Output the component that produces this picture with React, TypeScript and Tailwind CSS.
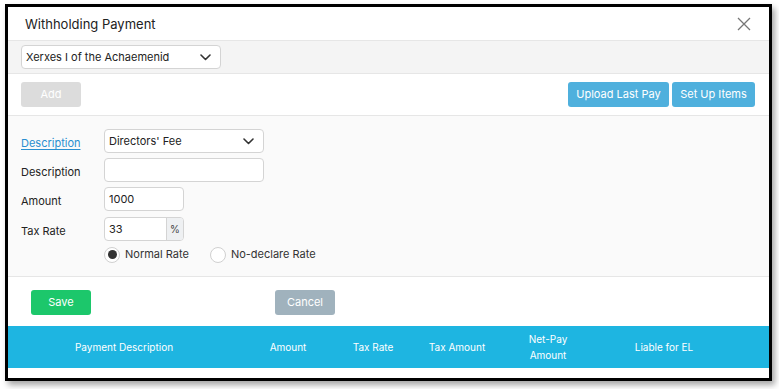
import React from "react";

const Chevron = () => (
  <svg width="11" height="7" viewBox="0 0 11 7" fill="none" className="shrink-0">
    <path d="M1 1l4.5 4.5L10 1" stroke="#333" strokeWidth="1.6" strokeLinecap="round" strokeLinejoin="round" />
  </svg>
);

export default function App() {
  const font = { fontFamily: "Inter, 'Noto Sans', sans-serif" };
  return (
    <div className="w-[779px] h-[389px] bg-white pl-[5px] pt-[4px]" style={font}>
      <div className="w-[767px] h-[377px] border-[3px] border-black bg-white flex flex-col shadow-[3px_4px_6px_rgba(0,0,0,0.35)] overflow-hidden">
        {/* header */}
        <div className="h-[34px] shrink-0 flex items-center justify-between pl-[17px] pr-[17px] border-b border-[#e6e6e6]">
          <span className="text-[13px] text-[#222] pt-[2px]">Withholding Payment</span>
          <svg width="14" height="14" viewBox="0 0 14 14" className="mr-[1px]">
            <path d="M1 1l12 12M13 1L1 13" stroke="#777" strokeWidth="1.3" />
          </svg>
        </div>
        {/* employee select band */}
        <div className="h-[33px] shrink-0 bg-[#f4f4f4] border-b border-[#e6e6e6] flex items-center pl-[13px]">
          <div className="w-[200px] h-[24px] bg-white border border-[#d4d4d4] rounded-[4px] flex items-center justify-between pl-[4px] pr-[9px]">
            <span className="text-[11px] text-[#222]">Xerxes I of the Achaemenid</span>
            <Chevron />
          </div>
        </div>
        {/* buttons band */}
        <div className="h-[42px] shrink-0 border-b border-[#e6e6e6] flex items-center justify-between pl-[13px] pr-[14px]">
          <button className="w-[60px] h-[25px] rounded-[3px] bg-[#dcdcdc] text-white text-[11px]">Add</button>
          <div className="flex gap-[3px]">
            <button className="w-[101px] h-[25px] rounded-[3px] bg-[#4fb0dd] text-white text-[11px]">Upload Last Pay</button>
            <button className="w-[83px] h-[25px] rounded-[3px] bg-[#4fb0dd] text-white text-[11px]">Set Up Items</button>
          </div>
        </div>
        {/* form */}
        <div className="h-[161px] shrink-0 bg-[#fafafa] border-b border-[#e6e6e6] pl-[13px] pt-[13px] flex flex-col text-[11px] text-[#222]">
          <div className="flex items-center h-[24px]">
            <span className="w-[83px] pt-[4px] text-[#2a8fd0] underline underline-offset-2">Description</span>
            <div className="w-[160px] h-[24px] bg-white border border-[#d4d4d4] rounded-[4px] flex items-center justify-between pl-[4px] pr-[9px]">
              <span>Directors' Fee</span>
              <Chevron />
            </div>
          </div>
          <div className="flex items-center h-[24px] mt-[5px]">
            <span className="w-[83px] pt-[4px]">Description</span>
            <div className="w-[160px] h-[24px] bg-white border border-[#d4d4d4] rounded-[4px]" />
          </div>
          <div className="flex items-center h-[24px] mt-[5px]">
            <span className="w-[83px] pt-[4px]">Amount</span>
            <div className="w-[80px] h-[24px] bg-white border border-[#d4d4d4] rounded-[4px] flex items-center pl-[4px]">1000</div>
          </div>
          <div className="flex items-center h-[24px] mt-[6px]">
            <span className="w-[83px] pt-[4px]">Tax Rate</span>
            <div className="w-[80px] h-[24px] bg-white border border-[#d4d4d4] rounded-[4px] flex overflow-hidden">
              <div className="flex-1 flex items-center pl-[4px]">33</div>
              <div className="w-[17px] bg-[#eef0f2] border-l border-[#d4d4d4] flex items-center justify-center text-[10px] text-[#444]">%</div>
            </div>
          </div>
          <div className="flex items-center h-[17px] mt-[5px] pl-[83px]">
            <div className="w-[16px] h-[16px] rounded-full border border-[#d0d0d0] bg-white flex items-center justify-center">
              <div className="w-[9px] h-[9px] rounded-full bg-[#333]" />
            </div>
            <span className="ml-[5px] text-[#333]">Normal Rate</span>
            <div className="w-[16px] h-[16px] rounded-full border border-[#d0d0d0] bg-white ml-[21px]" />
            <span className="ml-[5px] text-[#333]">No-declare Rate</span>
          </div>
        </div>
        {/* footer */}
        <div className="h-[49px] shrink-0 flex items-center pl-[23px] pt-[1px]">
          <button className="w-[60px] h-[25px] rounded-[3px] bg-[#1cc76b] text-white text-[11px]">Save</button>
          <button className="w-[60px] h-[25px] rounded-[3px] bg-[#a0b2bd] text-white text-[11px] ml-[184px]">Cancel</button>
        </div>
        {/* table header */}
        <div className="h-[42px] shrink-0 bg-[#1eb5e1] grid grid-cols-[232px_96px_74px_94px_88px_144px_1fr] items-center text-white text-[10px] text-center leading-[16px]">
          <span>Payment Description</span>
          <span>Amount</span>
          <span>Tax Rate</span>
          <span>Tax Amount</span>
          <span>Net-Pay<br />Amount</span>
          <span>Liable for EL</span>
          <span />
        </div>
        <div className="flex-1 bg-white" />
      </div>
    </div>
  );
}
